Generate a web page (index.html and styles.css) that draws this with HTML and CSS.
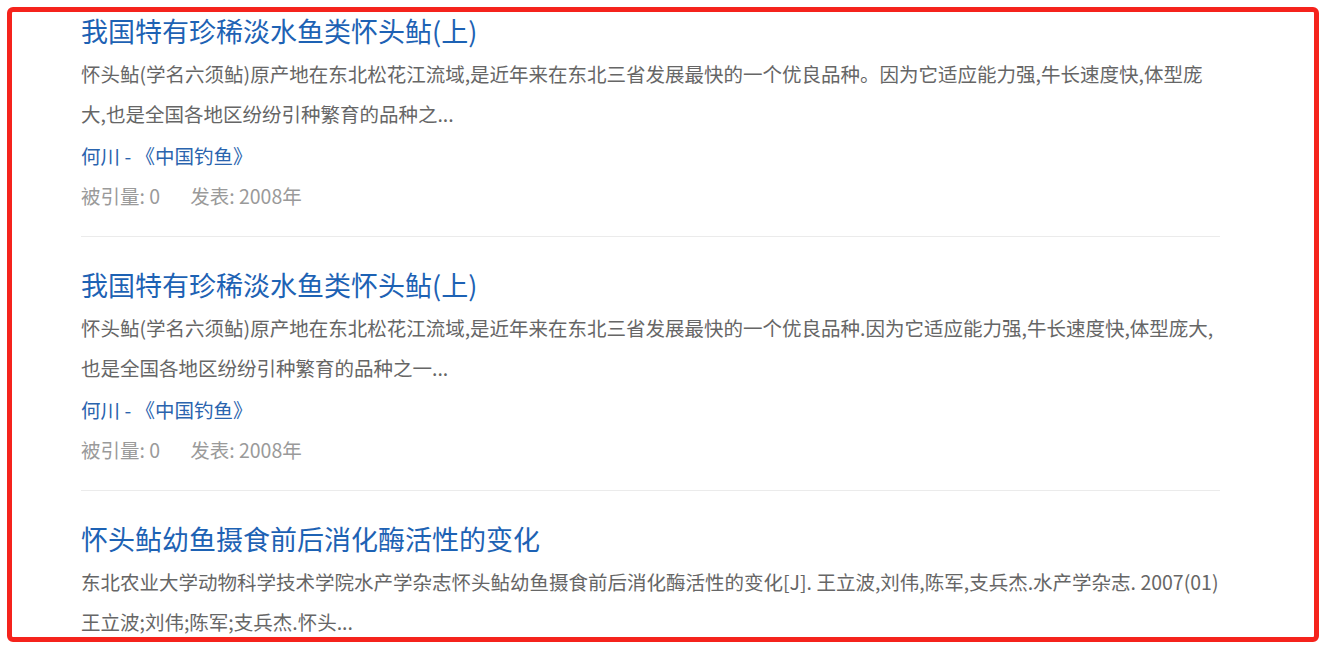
FILE: index.html
```html
<!DOCTYPE html>
<html lang="zh-CN">
<head>
    <meta charset="UTF-8">
    <meta name="viewport" content="width=device-width, initial-scale=1.0">
    <title>搜索结果</title>
    <link rel="stylesheet" href="styles.css">
</head>
<body>
    <!-- 红框标注区域 -->
    <div class="frame">
        <ul class="result-list">
            <li class="result">
                <a class="title" href="#">我国特有珍稀淡水鱼类怀头鲇(上)</a>
                <p class="desc">怀头鲇(学名六须鲇)原产地在东北松花江流域,是近年来在东北三省发展最快的一个优良品种。因为它适应能力强,牛长速度快,体型庞<br>大,也是全国各地区纷纷引种繁育的品种之...</p>
                <div class="author"><a href="#">何川</a> - <a href="#">《中国钓鱼》</a></div>
                <div class="meta">
                    <span>被引量: 0</span>
                    <span>发表: 2008年</span>
                </div>
            </li>
            <li class="result">
                <a class="title" href="#">我国特有珍稀淡水鱼类怀头鲇(上)</a>
                <p class="desc">怀头鲇(学名六须鲇)原产地在东北松花江流域,是近年来在东北三省发展最快的一个优良品种.因为它适应能力强,牛长速度快,体型庞大,<br>也是全国各地区纷纷引种繁育的品种之一...</p>
                <div class="author"><a href="#">何川</a> - <a href="#">《中国钓鱼》</a></div>
                <div class="meta">
                    <span>被引量: 0</span>
                    <span>发表: 2008年</span>
                </div>
            </li>
            <li class="result">
                <a class="title" href="#">怀头鲇幼鱼摄食前后消化酶活性的变化</a>
                <p class="desc">东北农业大学动物科学技术学院水产学杂志怀头鲇幼鱼摄食前后消化酶活性的变化[J]. 王立波,刘伟,陈军,支兵杰.水产学杂志. 2007(01)<br>王立波;刘伟;陈军;支兵杰.怀头...</p>
            </li>
        </ul>
    </div>
</body>
</html>
```

FILE: styles.css
```css
body {
    margin: 0;
    background-color: #fff;
    font-family: "Noto Sans CJK SC", "Liberation Sans", sans-serif;
}
.frame {
    margin: 7px 0 0 7px;
    width: 1312px;
    height: 635px;
    box-sizing: border-box;
    border: 5px solid #f5231c;
    border-radius: 6px;
    overflow: hidden;
}
.result-list {
    list-style: none;
    margin: -29px 0 0 0;
    padding: 0 0 0 69px;
    width: 1139px;
}
.result {
    padding: 25px 0 20px;
    border-bottom: 1px solid #ebebeb;
}
.result:last-child {
    padding-bottom: 0;
    border-bottom: none;
}
.result .title {
    display: block;
    font-size: 27px;
    line-height: 46px;
    color: #1d62b4;
    text-decoration: none;
}
.result .desc {
    margin: 0;
    font-size: 19.5px;
    line-height: 40px;
    color: #666;
    white-space: nowrap;
}
.result .author {
    margin-top: 2px;
    font-size: 19.5px;
    line-height: 40px;
    color: #2a64ae;
}
.result .author a {
    color: #2a64ae;
    text-decoration: none;
}
.result .meta {
    display: flex;
    gap: 30px;
    font-size: 19.5px;
    line-height: 40px;
    color: #9a9a9a;
}
```
